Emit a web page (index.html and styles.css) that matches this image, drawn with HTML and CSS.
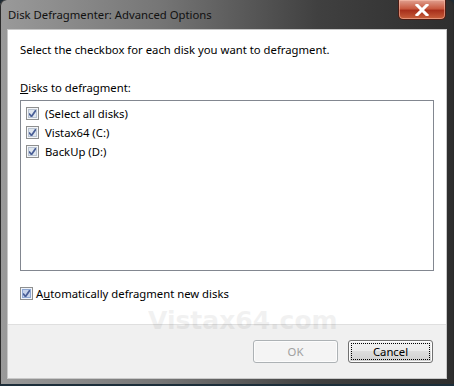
FILE: index.html
```html
<!DOCTYPE html>
<html lang="en">
<head>
    <meta charset="UTF-8">
    <title>Disk Defragmenter: Advanced Options</title>
    <link rel="stylesheet" href="styles.css">
</head>
<body>
    <div class="window">
        <div class="titlebar">
            <span class="title">Disk Defragmenter: Advanced Options</span>
            <button class="close" aria-label="Close">
                <svg width="16" height="12" viewBox="0 0 16 12">
                    <path d="M3 1 L13 11 M13 1 L3 11" stroke="#fff" stroke-width="3" stroke-linecap="square"/>
                </svg>
            </button>
        </div>

        <div class="client">
            <div class="content">
                <p class="intro">Select the checkbox for each disk you want to defragment.</p>

                <label class="caption"><u>D</u>isks to defragment:</label>
                <div class="listbox">
                    <div class="item"><span class="check"></span>(Select all disks)</div>
                    <div class="item"><span class="check"></span>Vistax64 (C:)</div>
                    <div class="item"><span class="check"></span>BackUp (D:)</div>
                </div>

                <div class="auto"><span class="check"></span>A<u>u</u>tomatically defragment new disks</div>
            </div>

            <!-- bottom button strip -->
            <div class="footer">
                <button class="btn" disabled>OK</button>
                <button class="btn focus">Cancel</button>
            </div>

            <div class="watermark">Vistax64.com</div>
        </div>
    </div>
</body>
</html>
```

FILE: styles.css
```css
body {
    margin: 0;
    background: #1e2a33;
    font-family: "Noto Sans", "Open Sans", sans-serif;
    font-size: 11.3px;
    color: #000;
}
.window {
    width: 454px;
    height: 386px;
    box-sizing: border-box;
    padding: 0 8px 8px 8px;
    border-radius: 6px 6px 0 0;
    background: linear-gradient(90deg, #9a9a9a 0%, #767676 35%, #404040 70%, #2e2e2e 100%);
    box-shadow: inset 0 -2px 0 #1c2e3a, inset 1px 0 0 #2a2a2a, inset -1px 0 0 #2a2a2a;
    display: flex;
    flex-direction: column;
}
.titlebar {
    height: 30px;
    flex: none;
    display: flex;
    justify-content: space-between;
    align-items: flex-start;
}
.title {
    margin-top: 7px;
    color: #111;
}
.close {
    width: 48px;
    height: 20px;
    padding: 0;
    border: 1px solid #4a1c14;
    border-top: 0;
    border-radius: 0 0 5px 5px;
    background: linear-gradient(180deg, #e0a090 0%, #c85a40 45%, #a8301c 55%, #c8603c 100%);
    box-shadow: inset 0 0 0 1px rgba(255, 200, 180, 0.5);
    display: flex;
    align-items: center;
    justify-content: center;
}
.client {
    height: 348px;
    flex: none;
    position: relative;
    background: #fff;
    box-shadow: 0 0 0 1px #c8c8c8;
    display: flex;
    flex-direction: column;
    overflow: hidden;
}
.content {
    height: 294px;
    box-sizing: border-box;
    padding: 12px 12px 0 12px;
}
.intro {
    margin: 0 0 22px 0;
    line-height: 16px;
}
.caption {
    display: block;
    line-height: 16px;
    margin-bottom: 4px;
}
.listbox {
    height: 171px;
    box-sizing: border-box;
    border: 1px solid #828790;
    padding: 3px 4px;
}
.item {
    display: flex;
    align-items: center;
    height: 19px;
}
.check {
    width: 11px;
    height: 11px;
    border: 1px solid #8e8f8f;
    margin: 0 6px 0 1px;
    background-color: #dfe6ee;
    background-image: url("data:image/svg+xml,%3Csvg xmlns='http://www.w3.org/2000/svg' width='11' height='11'%3E%3Cpath d='M2 5.5 L4.5 8.5 L9 2' fill='none' stroke='%234a5f97' stroke-width='1.8'/%3E%3C/svg%3E");
    box-shadow: inset 0 0 0 1px #f4f6f9, inset 0 0 0 2px #b9c3d1;
    flex: none;
}
.auto {
    display: flex;
    align-items: center;
    margin-top: 15px;
}
.auto .check {
    margin: 0 3px 0 0;
    background-color: #c7d3ea;
    box-shadow: inset 0 0 0 1px #f0f4fb, inset 0 0 0 2px #8ea7d3;
}
.footer {
    height: 54px;
    flex: none;
    box-sizing: border-box;
    background: #f0f0f0;
    border-top: 1px solid #dfdfdf;
    display: flex;
    justify-content: flex-end;
    align-items: flex-start;
    gap: 10px;
    padding: 15px 13px 0 0;
}
.btn {
    width: 85px;
    height: 23px;
    font-family: inherit;
    font-size: 11.3px;
    color: #000;
    border: 1px solid #707070;
    border-radius: 3px;
    background: linear-gradient(180deg, #f2f2f2 0%, #ebebeb 49%, #dddddd 50%, #cfcfcf 100%);
    box-shadow: inset 0 0 0 1px #fcfcfc;
    padding: 0;
}
.btn:disabled {
    color: #a0a0a0;
    border-color: #adb2b5;
    background: #f4f4f4;
}
.btn.focus {
    outline: 1px dotted #000;
    outline-offset: -4px;
}
.watermark {
    position: absolute;
    left: 140px;
    top: 276px;
    font-family: "DejaVu Sans", sans-serif;
    font-weight: bold;
    font-size: 25px;
    color: #000;
    opacity: 0.05;
    pointer-events: none;
}
```
